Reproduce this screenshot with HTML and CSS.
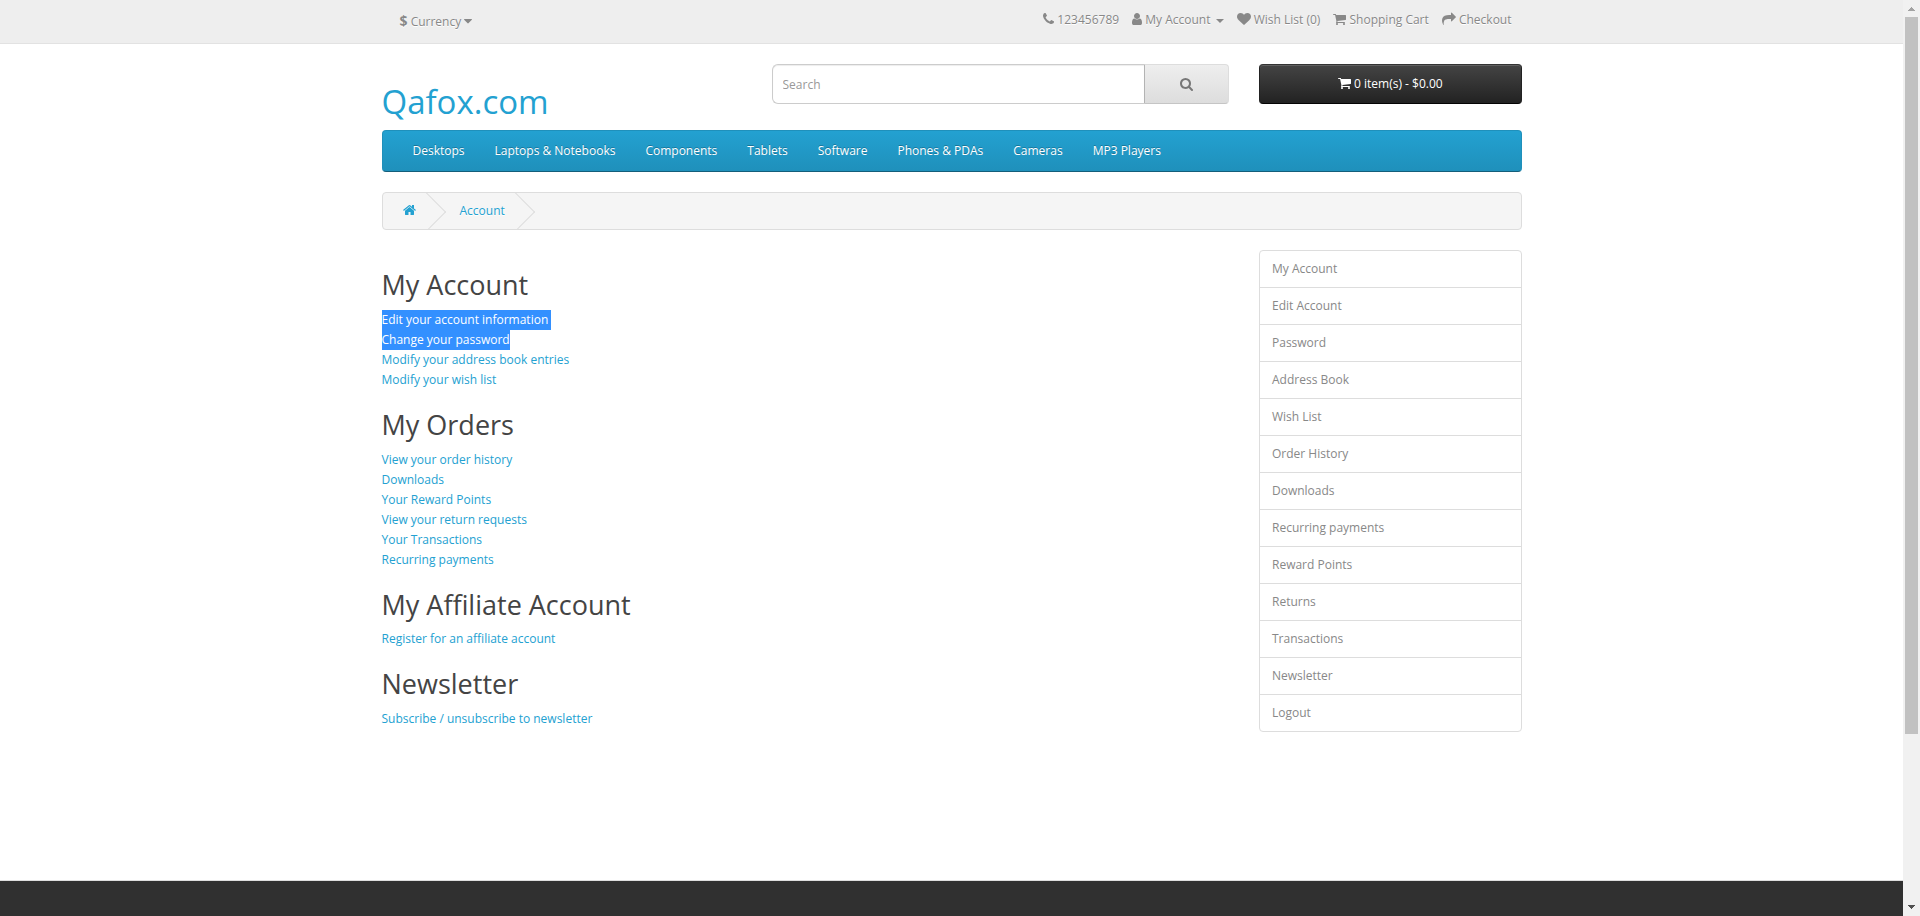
FILE: index.html
```html
<!DOCTYPE html>
<html lang="en">
<head>
<meta charset="utf-8">
<title>My Account</title>
<link rel="stylesheet" href="styles.css">
</head>
<body>
<svg class="sprite" aria-hidden="true">
  <symbol id="cart" viewBox="64 0 1664 1792"><path d="M704 1536q0 52-38 90t-90 38-90-38-38-90 38-90 90-38 90 38 38 90zm896 0q0 52-38 90t-90 38-90-38-38-90 38-90 90-38 90 38 38 90zm128-1088v512q0 24-16.5 42.5t-40.5 21.5l-1044 122q13 60 13 70 0 16-24 64h920q26 0 45 19t19 45-19 45-45 19h-1024q-26 0-45-19t-19-45q0-11 8-31.5t16-36 21.5-40 15.5-29.5l-177-823h-204q-26 0-45-19t-19-45 19-45 45-19h256q16 0 28.5 6.5t19.5 15.5 13 24.5 8 26 5.5 29.5 4.5 26h1201q26 0 45 19t19 45z"/></symbol>
</svg>
<div class="page">
  <nav class="top">
    <div class="container top-row">
      <button class="currency"><strong>$</strong> <span>Currency</span> <svg class="icon w8" viewBox="384 0 1024 1792"><path d="M1408 704q0 26-19 45l-448 448q-19 19-45 19t-45-19l-448-448q-19-19-19-45t19-45 45-19h896q26 0 45 19t19 45z"/></svg></button>
      <ul class="top-links">
        <li><svg class="icon w11" viewBox="192 0 1408 1792"><path d="M1600 1240q0 27-10 70.5t-21 68.5q-21 50-122 106-94 51-186 51-27 0-53-3.5t-57.5-12.5-47-14.5-55.5-20.5-49-18q-98-35-175-83-127-79-264-216t-216-264q-48-77-83-175-3-9-18-49t-20.5-55.5-14.5-47-12.5-57.5-3.5-53q0-92 51-186 56-101 106-122 25-11 68.5-21t70.5-10q14 0 21 3 18 6 53 76 11 19 30 54t35 63.5 31 53.5q3 4 17.5 25t21.5 35.5 7 28.5q0 20-28.5 50t-62 55-62 53-28.5 46q0 9 5 22.5t8.5 20.5 14 24 11.5 19q76 137 174 235t235 174q2 1 19 11.5t24 14 20.5 8.5 22.5 5q18 0 46-28.5t53-62 55-62 50-28.5q14 0 28.5 7t35.5 21.5 25 17.5q25 15 53.5 31t63.5 35 54 30q70 35 76 53 3 7 3 21z"/></svg> <span>123456789</span></li>
        <li><svg class="icon w10" viewBox="256 0 1280 1792"><path d="M1536 1399q0 109-62.5 187t-150.5 78h-854q-88 0-150.5-78t-62.5-187q0-85 8.5-160.5t31.5-152 58.5-131 94-89 134.5-34.5q131 128 313 128t313-128q76 0 134.5 34.5t94 89 58.5 131 31.5 152 8.5 160.5zm-256-887q0 159-112.5 271.5t-271.5 112.5-271.5-112.5-112.5-271.5 112.5-271.5 271.5-112.5 271.5 112.5 112.5 271.5z"/></svg> <span>My Account</span> <i class="caret"></i></li>
        <li><svg class="icon w14" viewBox="0 0 1792 1792"><path d="M896 1664q-26 0-44-18l-624-602q-10-8-27.5-26t-55.5-65.5-68-97.5-53.5-121-23.5-138q0-220 127-344t351-124q62 0 126.5 21.5t120 58 95.5 68.5 76 68q36-36 76-68t95.5-68.5 120-58 126.5-21.5q224 0 351 124t127 344q0 221-229 450l-623 600q-18 18-44 18z"/></svg> <span>Wish List (0)</span></li>
        <li><svg class="icon w13"><use href="#cart"/></svg> <span>Shopping Cart</span></li>
        <li><svg class="icon w14" viewBox="0 0 1792 1792"><path d="M1792 640q0 26-19 45l-512 512q-19 19-45 19t-45-19-19-45v-256h-224q-98 0-175.5 6t-154 21.5-133 42.5-105.5 69.5-80 101-48.5 138.5-17.5 181q0 55 5 123 0 6 2.5 23.5t2.5 26.5q0 15-8.5 25t-23.5 10q-16 0-28-17-7-9-13-22t-13.5-30-10.5-24q-127-285-127-451 0-199 53-333 162-403 875-403h224v-256q0-26 19-45t45-19 45 19l512 512q19 19 19 45z"/></svg> <span>Checkout</span></li>
      </ul>
    </div>
  </nav>

  <header class="container header">
    <h1 class="logo"><a href="#">Qafox.com</a></h1>
    <div class="search">
      <input type="text" placeholder="Search">
      <button class="search-btn" aria-label="Search"><svg class="icon w13" viewBox="64 0 1664 1792"><path d="M1216 832q0-185-131.5-316.5t-316.5-131.5-316.5 131.5-131.5 316.5 131.5 316.5 316.5 131.5 316.5-131.5 131.5-316.5zm512 832q0 52-38 90t-90 38q-54 0-90-38l-343-342q-179 124-399 124-143 0-273.5-55.5t-225-150-150-225-55.5-273.5 55.5-273.5 150-225 225-150 273.5-55.5 273.5 55.5 225 150 150 225 55.5 273.5q0 220-124 399l343 343q37 37 37 90z"/></svg></button>
    </div>
    <button class="cart-btn"><svg class="icon w13"><use href="#cart"/></svg> <span>0 item(s) - $0.00</span></button>
  </header>

  <div class="container">
    <nav class="menu">
      <a href="#">Desktops</a><a href="#">Laptops &amp; Notebooks</a><a href="#">Components</a><a href="#">Tablets</a><a href="#">Software</a><a href="#">Phones &amp; PDAs</a><a href="#">Cameras</a><a href="#">MP3 Players</a>
    </nav>
    <ul class="breadcrumb">
      <li><a href="#" aria-label="Home"><svg class="icon w13" viewBox="64 0 1664 1792"><path d="M1472 992v480q0 26-19 45t-45 19h-384v-384h-256v384h-384q-26 0-45-19t-19-45v-480q0-1 .5-3t.5-3l575-474 575 474q1 2 1 6zm223-69l-62 74q-8 9-21 11h-3q-13 0-21-7l-692-577-692 577q-12 8-24 7-13-2-21-11l-62-74q-8-10-7-23.5t11-21.5l719-599q32-26 76-26t76 26l244 204v-195q0-14 9-23t23-9h192q14 0 23 9t9 23v408l219 182q10 8 11 21.5t-7 23.5z"/></svg></a></li>
      <li><a href="#">Account</a></li>
    </ul>
    <div class="columns">
      <main class="content">
        <h2>My Account</h2>
        <ul>
          <li><a class="selected trailing" href="#">Edit your account information</a></li>
          <li><a class="selected" href="#">Change your password</a></li>
          <li><a href="#">Modify your address book entries</a></li>
          <li><a href="#">Modify your wish list</a></li>
        </ul>
        <h2>My Orders</h2>
        <ul>
          <li><a href="#">View your order history</a></li>
          <li><a href="#">Downloads</a></li>
          <li><a href="#">Your Reward Points</a></li>
          <li><a href="#">View your return requests</a></li>
          <li><a href="#">Your Transactions</a></li>
          <li><a href="#">Recurring payments</a></li>
        </ul>
        <h2>My Affiliate Account</h2>
        <ul>
          <li><a href="#">Register for an affiliate account</a></li>
        </ul>
        <h2>Newsletter</h2>
        <ul>
          <li><a href="#">Subscribe / unsubscribe to newsletter</a></li>
        </ul>
      </main>
      <aside class="list-group">
        <a href="#">My Account</a>
        <a href="#">Edit Account</a>
        <a href="#">Password</a>
        <a href="#">Address Book</a>
        <a href="#">Wish List</a>
        <a href="#">Order History</a>
        <a href="#">Downloads</a>
        <a href="#">Recurring payments</a>
        <a href="#">Reward Points</a>
        <a href="#">Returns</a>
        <a href="#">Transactions</a>
        <a href="#">Newsletter</a>
        <a href="#">Logout</a>
      </aside>
    </div>
  </div>
  <footer class="footer"></footer>
</div>
<div class="scrollbar">
  <svg class="arrow" viewBox="0 0 7 4" shape-rendering="crispEdges"><path fill="#a3a3a3" d="M3 0h1v1h1v1h1v1h1v1H0V3h1V2h1V1h1z"/></svg>
  <div class="thumb"></div>
  <svg class="arrow down" viewBox="0 0 7 4" shape-rendering="crispEdges"><path fill="#505050" d="M0 0h7v1H6v1H5v1H4v1H3V3H2V2H1V1H0z"/></svg>
</div>
</body>
</html>
```
FILE: styles.css
```css
* {
  box-sizing: border-box;
}

body {
  margin: 0;
  height: 916px;
  display: flex;
  overflow: hidden;
  background: #fff;
  color: #666;
  font: 400 12px/20px "Open Sans", sans-serif;
}

a {
  color: #23a1d1;
  text-decoration: none;
}

ul {
  margin: 0;
  padding: 0;
  list-style: none;
}

button,
input {
  font: inherit;
}

.sprite {
  position: absolute;
  width: 0;
  height: 0;
}

.icon {
  display: inline-block;
  height: 14px;
  fill: currentColor;
  vertical-align: -2px;
}

.w8 { width: 8px; }
.w10 { width: 10px; }
.w11 { width: 11px; }
.w13 { width: 13px; }
.w14 { width: 14px; }

.page {
  flex: 1;
  display: flex;
  flex-direction: column;
}

.container {
  width: 1170px;
  margin: 0 auto;
  padding: 0 15px;
}

/* Top bar */
.top {
  height: 44px;
  margin-bottom: 20px;
  background: #eee;
  border-bottom: 1px solid #e2e2e2;
}

.top-row {
  display: flex;
  justify-content: space-between;
  color: #888;
  text-shadow: 0 1px 0 #fff;
}

.currency {
  margin: 4px 0 0 6px;
  padding: 7px 12px;
  height: 35px;
  border: 0;
  background: none;
  color: #888;
  text-shadow: 0 1px 0 #fff;
}

.currency strong {
  font-size: 14px;
  line-height: 16px;
}

.top-links {
  display: flex;
  gap: 3px;
  padding: 10px 5px 0 0;
}

.top-links li {
  padding: 0 5px;
}

.caret {
  display: inline-block;
  margin-left: 2px;
  vertical-align: middle;
  border-top: 4px solid;
  border-right: 4px solid transparent;
  border-left: 4px solid transparent;
}

/* Header */
.header {
  display: flex;
  height: 66px;
}

.logo {
  width: 390px;
  margin: 20px 0 0;
  font-size: 33px;
  line-height: 36px;
  font-weight: 400;
}

.search {
  display: flex;
  width: 457.5px;
  height: 40px;
  margin-right: 30px;
}

.search input {
  flex: 1;
  min-width: 0;
  padding: 2px 10px 0;
  border: 1px solid #ccc;
  border-right: 0;
  border-radius: 6px 0 0 6px;
  box-shadow: inset 0 1px 1px rgba(0, 0, 0, .075);
}

.search input::placeholder {
  color: #999;
}

.search-btn {
  width: 85px;
  padding: 2px 0 0;
  border: 1px solid;
  border-color: #ddd #ddd #c5c5c5 #b3b3b3;
  border-radius: 0 4px 4px 0;
  background: linear-gradient(#eee, #ddd);
  color: #777;
}

.cart-btn {
  flex: 1;
  height: 40px;
  padding: 0;
  border: 1px solid;
  border-color: #333 #222 #040404;
  border-radius: 4px;
  background: linear-gradient(#444, #222);
  box-shadow: inset 0 1px 0 #606060;
  color: #fff;
}

/* Category menu */
.menu {
  display: flex;
  height: 42px;
  margin-bottom: 20px;
  padding: 0 15px;
  border: 1px solid;
  border-color: #1f90bb #1f90bb #145e7a;
  border-radius: 4px;
  background: linear-gradient(#23a1d1, #1f90bb);
}

.menu a {
  padding: 10px 15px;
  color: #fff;
  text-shadow: 0 -1px 0 rgba(0, 0, 0, .25);
}

/* Breadcrumb */
.breadcrumb {
  display: flex;
  gap: 4px;
  height: 38px;
  margin-bottom: 20px;
  padding: 8px 0;
  border: 1px solid #ddd;
  border-radius: 4px;
  background: #f5f5f5;
  overflow: hidden;
}

.breadcrumb li {
  position: relative;
  padding: 0 20px;
  text-shadow: 0 1px 0 #fff;
}

.breadcrumb li::after {
  content: "";
  position: absolute;
  top: -4.5px;
  right: -4px;
  width: 29px;
  height: 29px;
  border-right: 1px solid #ddd;
  border-bottom: 1px solid #ddd;
  transform: rotate(-45deg);
}

/* Account page */
.columns {
  display: flex;
  align-items: flex-start;
  justify-content: space-between;
}

.content {
  padding-top: .2px;
}

.content h2 {
  margin: 20px 0 10px;
  color: #444;
  font-size: 27px;
  line-height: 1.1;
  font-weight: 400;
}

.content li {
  display: flex;
}

.content .selected {
  background: #3390ff;
  color: #fff;
}

.content .trailing {
  padding-right: 3px;
}

.list-group {
  width: 262.5px;
  border: 1px solid #ddd;
  border-radius: 4px;
}

.list-group a {
  display: block;
  padding: 8px 12px;
  color: #888;
}

.list-group a + a {
  border-top: 1px solid #ddd;
}

.footer {
  height: 36px;
  margin-top: auto;
  border-top: 1px solid #ddd;
  background: #303030;
}

/* Window scrollbar */
.scrollbar {
  display: flex;
  flex-direction: column;
  align-items: center;
  width: 17px;
  padding: 7px 0;
  background: #f1f1f1;
}

.arrow {
  width: 7px;
  height: 4px;
}

.arrow.down {
  margin-top: auto;
}

.thumb {
  width: 13px;
  height: 717px;
  margin-top: 6px;
  background: #c1c1c1;
}
```
